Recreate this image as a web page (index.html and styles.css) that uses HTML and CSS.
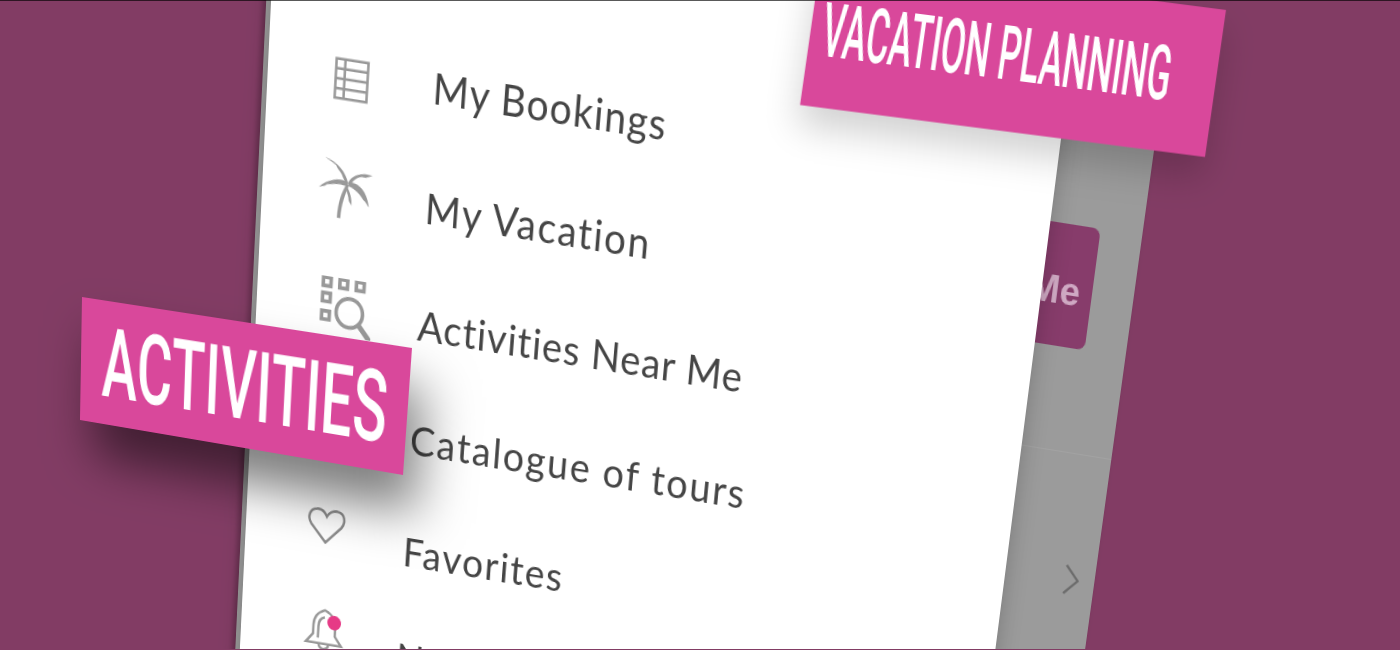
FILE: index.html
```html
<!DOCTYPE html>
<html lang="en">

<head>
  <meta charset="UTF-8" />
  <title>Activities and vacation planning</title>
  <link rel="stylesheet" href="styles.css">
</head>

<body>

  <div class="stage">

    <div class="phone">
      <div class="backdrop">
        <div class="backdrop-head">
          <div class="near-btn">Near Me</div>
        </div>
        <div class="backdrop-row">
          <svg class="chevron" viewBox="0 0 20 36">
            <path d="M3 3 L17 18 L3 33" />
          </svg>
        </div>
      </div>

      <nav class="drawer">
        <a class="item">
          <svg class="icon icon-table" viewBox="0 0 48 48">
            <path d="M6 4 H42 V44 H6 Z M6 14 H42 M6 24 H42 M6 34 H42 M16 4 V44" />
          </svg>
          <span class="item-label">My Bookings</span>
        </a>
        <a class="item">
          <svg class="icon icon-palm" viewBox="0 0 48 48">
            <path class="solid" d="M18 47 C18 35 21 26 25 19 L27 20 C24 28 21 36 21 47 Z" />
            <path class="solid" d="M26 19 C24 11 16 3 5 1 C9 3 12 4 15 6 C16 9 20 11 21 14 C22 16 24 18 24 20 Z" />
            <path class="solid" d="M26 19 C28 12 37 8 47 10 C43 11 41 13 38 12 C33 13 30 16 28 20 Z" />
            <path class="solid" d="M26 18 C18 15 8 18 1 25 C4 24 6 24 8 22 C13 21 19 20 25 21 Z" />
            <path class="solid" d="M26 18 C35 16 43 23 45 35 C43 33 42 31 40 30 C37 26 32 22 27 21 Z" />
            <path class="solid" d="M25 21 C28 25 30 30 30 36 C29 34 27 33 27 30 C26 27 25 24 24 22 Z" />
          </svg>
          <span class="item-label label-wide">My Vacation</span>
        </a>
        <a class="item">
          <svg class="icon icon-search" viewBox="0 0 48 48">
            <path d="M2 1 H9 V8 H2 Z M17 1 H24 V8 H17 Z M32 1 H39 V8 H32 Z M2 14 H9 V21 H2 Z M2 29 H9 V36 H2 Z" />
            <circle cx="27" cy="28" r="12" />
            <path class="thick" d="M36 37 L45 47" />
          </svg>
          <span class="item-label label-tight">Activities Near Me</span>
        </a>
        <a class="item">
          <svg class="icon" viewBox="0 0 48 48">
            <path d="M6 6 H42 V42 H6 Z M24 6 V42" />
          </svg>
          <span class="item-label label-wider">Catalogue of tours</span>
        </a>
        <a class="item">
          <svg class="icon icon-heart" viewBox="0 0 48 48">
            <path d="M24 42 L6 23 C1 16 4 7 12 6 C18 5 22 9 24 13 C26 9 31 5 37 6 C45 7 47 16 42 23 Z" />
          </svg>
          <span class="item-label label-wide">Favorites</span>
        </a>
        <a class="item item-last">
          <span class="bell">
            <svg class="icon" viewBox="0 0 48 48">
              <path d="M24 2 C16 5 11 11 11 20 V30 L3 40 H45 L37 30 V20 C37 11 32 5 24 2 Z" />
              <path d="M17 34 V21 C17 15 20 11 24 10" />
              <path d="M18 40 C19 48 29 48 30 40" />
            </svg>
            <span class="dot"></span>
          </span>
          <span class="item-label">Notifications</span>
        </a>
      </nav>
    </div>

    <div class="tag tag-planning">
      <span class="tag-text">VACATION PLANNING</span>
    </div>

    <div class="tag tag-activities">
      <span class="tag-text">ACTIVITIES</span>
    </div>

    <div class="frame"></div>
  </div>

</body>

</html>
```

FILE: styles.css
```css
body {
  margin: 0;
  background-color: #823c64;
  font-family: "Lato", "Open Sans", sans-serif;
}

.stage {
  position: relative;
  height: 650px;
  overflow: hidden;
}

.frame {
  position: absolute;
  inset: 0;
  border-top: 1px solid rgba(0, 0, 0, 0.65);
  border-bottom: 1px solid #823c64;
}

/* the phone is tilted with a perspective, corners worked out from the picture */
.phone {
  position: absolute;
  left: 0;
  top: 0;
  width: 905px;
  height: 800px;
  background: #9b9b9b;
  box-shadow: -3px 0 6px rgba(0, 0, 0, 0.25);
  transform-origin: 0 0;
  transform: matrix3d(0.96798, 0.15193, 0, -0.00001796,
      -0.02315, 1.09419, 0, 0.00010892,
      0, 0, 1, 0,
      274, -60, 0, 1) translateX(-5px);
}

.backdrop {
  margin-left: 5px;
}

.backdrop-head {
  display: flex;
  justify-content: flex-end;
  box-sizing: border-box;
  height: 360px;
  padding: 145px 42px 0 0;
  border-bottom: 1px solid #a2a2a2;
}

.near-btn {
  display: flex;
  align-items: center;
  justify-content: flex-end;
  width: 230px;
  height: 115px;
  padding: 10px 12px 0 0;
  box-sizing: border-box;
  border-radius: 8px;
  background: #873c6b;
  color: #cfa9c3;
  font-family: "Liberation Sans", sans-serif;
  font-size: 37px;
  font-weight: bold;
}

.backdrop-row {
  display: flex;
  justify-content: flex-end;
  align-items: center;
  height: 245px;
  padding-right: 14px;
}

.chevron {
  width: 20px;
  height: 34px;
  fill: none;
  stroke: #6c6c6c;
  stroke-width: 2.5;
}

.drawer {
  position: absolute;
  left: 5px;
  top: -200px;
  bottom: 0;
  width: 807px;
  padding-top: 255px;
  box-sizing: border-box;
  overflow: hidden;
  background: #fff;
  box-shadow: 0 0 22px rgba(0, 0, 0, 0.22);
}

.item {
  display: flex;
  align-items: center;
  gap: 62px;
  height: 113px;
  padding-left: 65px;
}

.item-last .item-label {
  margin-top: -8px;
}

.item-label {
  font-size: 40px;
  letter-spacing: 1.2px;
  color: #454545;
}

.label-tight {
  letter-spacing: 1px;
}

.label-wide {
  letter-spacing: 1.7px;
}

.label-wider {
  letter-spacing: 1.9px;
}

.icon {
  display: block;
  flex: none;
  width: 44px;
  height: 44px;
  margin-top: -14px;
  fill: none;
  stroke: #999;
  stroke-width: 2.8;
}

.icon-table {
  margin-top: 10px;
}

.icon-palm {
  width: 58px;
  height: 58px;
  margin: -10px -7px 0;
}

.icon-search {
  width: 56px;
  height: 56px;
  margin: -10px -14px 0 2px;
  stroke-width: 3.2;
}

.icon-heart {
  margin-top: -24px;
  stroke: #8d8d8d;
}

.icon .solid {
  fill: #999;
  stroke: none;
}

.icon .thick {
  stroke-width: 4.5;
  stroke-linecap: round;
}

.bell {
  position: relative;
  flex: none;
  margin-top: -38px;
  transform: translateX(4px);
}

.bell .icon {
  margin-top: 0;
}

.dot {
  position: absolute;
  top: 6px;
  right: 4px;
  width: 15px;
  height: 15px;
  border-radius: 50%;
  background: #e63a86;
}

.tag {
  position: absolute;
  left: 0;
  top: 0;
  display: flex;
  align-items: center;
  box-sizing: border-box;
  background: #d9489b;
  color: #fff;
  font-family: "Roboto", "Liberation Sans", sans-serif;
  font-weight: 500;
  white-space: nowrap;
  transform-origin: 0 0;
}

.tag-text {
  display: inline-block;
  transform-origin: 0 50%;
}

.tag-planning {
  width: 410px;
  height: 148px;
  padding: 0 0 6px 12px;
  font-size: 75px;
  box-shadow: 0 20px 34px rgba(0, 0, 0, 0.18);
  transform: matrix(0.9878, 0.12683, -0.14189, 0.99324, 821, -42);
}

.tag-planning .tag-text {
  transform: scaleX(0.47);
}

.tag-activities {
  width: 330px;
  height: 125px;
  padding-left: 22px;
  font-size: 98px;
  box-shadow: 14px 36px 50px rgba(0, 0, 0, 0.5);
  transform: matrix3d(0.94958, 0.11194, 0, -0.0001224,
      -0.00285, 1.05304, 0, 0.0001644,
      0, 0, 1, 0,
      82, 297, 0, 1);
}

.tag-activities .tag-text {
  transform: scaleX(0.57);
}
```
